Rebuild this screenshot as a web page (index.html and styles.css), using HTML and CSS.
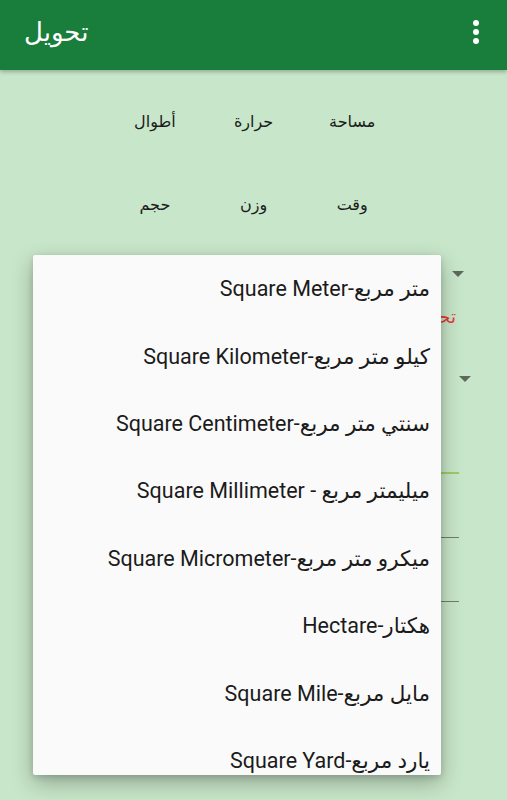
FILE: index.html
```html
<!DOCTYPE html>
<html lang="ar">
<head>
<meta charset="utf-8">
<link rel="stylesheet" href="styles.css">
</head>
<body>
<header class="appbar">
  <div class="title">تحويل</div>
  <div class="kebab"><span></span><span></span><span></span></div>
</header>
<main class="content">
  <div class="cats" dir="rtl">
    <div class="cat">مساحة</div>
    <div class="cat">حرارة</div>
    <div class="cat">أطوال</div>
    <div class="cat">وقت</div>
    <div class="cat">وزن</div>
    <div class="cat">حجم</div>
  </div>
  <div class="form">
    <div class="spinner s1"><span class="tri"></span></div>
    <div class="label">تحويل من</div>
    <div class="spinner s2"><span class="tri"></span></div>
    <div class="field active"></div>
    <div class="field"></div>
    <div class="field"></div>
  </div>
</main>
<div class="popup" dir="rtl">
  <div class="item">متر مربع-Square Meter</div>
  <div class="item">كيلو متر مربع-Square Kilometer</div>
  <div class="item">سنتي متر مربع-Square Centimeter</div>
  <div class="item">ميليمتر مربع - Square Millimeter</div>
  <div class="item">ميكرو متر مربع-Square Micrometer</div>
  <div class="item">هكتار-Hectare</div>
  <div class="item">مايل مربع-Square Mile</div>
  <div class="item">يارد مربع-Square Yard</div>
</div>
</body>
</html>
```
FILE: styles.css
```css
html, body {
  margin: 0;
  padding: 0;
}
body {
  width: 507px;
  height: 800px;
  overflow: hidden;
  background: #c8e6c9;
  font-family: Roboto, "DejaVu Sans", sans-serif;
  position: relative;
}
.appbar {
  height: 70px;
  background: #197d3c;
  display: flex;
  align-items: center;
  justify-content: space-between;
  padding: 0 28px 0 24px;
  box-shadow: 0 2px 4px rgba(0,0,0,0.25);
  position: relative;
  z-index: 1;
}
.title {
  color: #fff;
  font-size: 26px;
  margin-top: -6px;
}
.kebab {
  display: flex;
  flex-direction: column;
  gap: 3px;
  margin-top: -6px;
}
.kebab span {
  width: 6px;
  height: 6px;
  border-radius: 50%;
  background: #fff;
}
.content {
  padding-top: 10px;
}
.cats {
  width: 296px;
  margin: 0 auto;
  display: grid;
  grid-template-columns: repeat(3, 1fr);
  grid-auto-rows: 83px;
}
.cat {
  display: flex;
  align-items: center;
  justify-content: center;
  font-size: 16px;
  color: #1c1c1c;
}
.form {
  position: relative;
}
.spinner {
  height: 30px;
  display: flex;
  justify-content: flex-end;
  align-items: center;
}
.s1 {
  padding-right: 43px;
  margin-top: 13px;
}
.s2 {
  padding-right: 36px;
  margin-top: 37px;
}
.tri {
  width: 0;
  height: 0;
  border-left: 6px solid transparent;
  border-right: 6px solid transparent;
  border-top: 6px solid #5d695d;
}
.label {
  text-align: right;
  color: #e53935;
  font-size: 18px;
  padding-right: 51px;
  margin-top: 17px;
  direction: rtl;
}
.field {
  margin-left: 48px;
  margin-right: 48px;
  height: 1px;
  background: #6f7d6f;
}
.field.active {
  height: 2px;
  background: #9ccc65;
  margin-top: 78px;
}
.field + .field {
  margin-top: 63px;
}
.popup {
  position: absolute;
  left: 33px;
  top: 255px;
  width: 408px;
  height: 520px;
  background: #fafafa;
  border-radius: 2px;
  box-shadow: 0 8px 22px rgba(0,0,0,0.28), 0 2px 6px rgba(0,0,0,0.15);
  overflow: hidden;
  z-index: 2;
}
.item {
  height: 67.4px;
  display: flex;
  align-items: center;
  padding-right: 11px;
  font-size: 21.5px;
  color: #1b1b1b;
  white-space: nowrap;
}
```
